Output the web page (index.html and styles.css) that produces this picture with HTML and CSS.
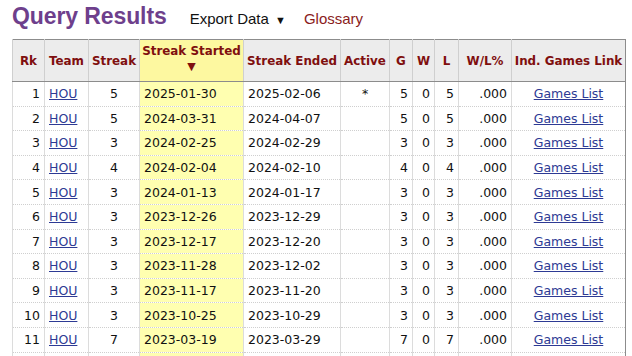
FILE: index.html
```html
<!DOCTYPE html>
<html>
<head>
<meta charset="utf-8">
<link rel="stylesheet" href="styles.css">
</head>
<body>
<div class="top">
  <h1 class="title">Query Results</h1>
  <span class="export">Export Data <span class="tri">▼</span></span>
  <span class="gloss">Glossary</span>
</div>
<table class="res">
  <colgroup>
    <col class="c-rk"><col class="c-team"><col class="c-streak"><col class="c-start"><col class="c-end"><col class="c-active"><col class="c-g"><col class="c-w"><col class="c-l"><col class="c-pct"><col class="c-link">
  </colgroup>
  <thead>
    <tr>
      <th>Rk</th><th>Team</th><th>Streak</th><th class="sorted">Streak Started<br><span class="arrow">▼</span></th><th>Streak Ended</th><th>Active</th><th>G</th><th>W</th><th>L</th><th>W/L%</th><th>Ind. Games Link</th>
    </tr>
  </thead>
  <tbody>
    <tr><td class="r">1</td><td><a href="#">HOU</a></td><td class="c">5</td><td class="y">2025-01-30</td><td>2025-02-06</td><td class="c">*</td><td class="r">5</td><td class="r">0</td><td class="r">5</td><td class="r">.000</td><td class="c"><a href="#">Games List</a></td></tr>
    <tr><td class="r">2</td><td><a href="#">HOU</a></td><td class="c">5</td><td class="y">2024-03-31</td><td>2024-04-07</td><td class="c"></td><td class="r">5</td><td class="r">0</td><td class="r">5</td><td class="r">.000</td><td class="c"><a href="#">Games List</a></td></tr>
    <tr><td class="r">3</td><td><a href="#">HOU</a></td><td class="c">3</td><td class="y">2024-02-25</td><td>2024-02-29</td><td class="c"></td><td class="r">3</td><td class="r">0</td><td class="r">3</td><td class="r">.000</td><td class="c"><a href="#">Games List</a></td></tr>
    <tr><td class="r">4</td><td><a href="#">HOU</a></td><td class="c">4</td><td class="y">2024-02-04</td><td>2024-02-10</td><td class="c"></td><td class="r">4</td><td class="r">0</td><td class="r">4</td><td class="r">.000</td><td class="c"><a href="#">Games List</a></td></tr>
    <tr><td class="r">5</td><td><a href="#">HOU</a></td><td class="c">3</td><td class="y">2024-01-13</td><td>2024-01-17</td><td class="c"></td><td class="r">3</td><td class="r">0</td><td class="r">3</td><td class="r">.000</td><td class="c"><a href="#">Games List</a></td></tr>
    <tr><td class="r">6</td><td><a href="#">HOU</a></td><td class="c">3</td><td class="y">2023-12-26</td><td>2023-12-29</td><td class="c"></td><td class="r">3</td><td class="r">0</td><td class="r">3</td><td class="r">.000</td><td class="c"><a href="#">Games List</a></td></tr>
    <tr><td class="r">7</td><td><a href="#">HOU</a></td><td class="c">3</td><td class="y">2023-12-17</td><td>2023-12-20</td><td class="c"></td><td class="r">3</td><td class="r">0</td><td class="r">3</td><td class="r">.000</td><td class="c"><a href="#">Games List</a></td></tr>
    <tr><td class="r">8</td><td><a href="#">HOU</a></td><td class="c">3</td><td class="y">2023-11-28</td><td>2023-12-02</td><td class="c"></td><td class="r">3</td><td class="r">0</td><td class="r">3</td><td class="r">.000</td><td class="c"><a href="#">Games List</a></td></tr>
    <tr><td class="r">9</td><td><a href="#">HOU</a></td><td class="c">3</td><td class="y">2023-11-17</td><td>2023-11-20</td><td class="c"></td><td class="r">3</td><td class="r">0</td><td class="r">3</td><td class="r">.000</td><td class="c"><a href="#">Games List</a></td></tr>
    <tr><td class="r">10</td><td><a href="#">HOU</a></td><td class="c">3</td><td class="y">2023-10-25</td><td>2023-10-29</td><td class="c"></td><td class="r">3</td><td class="r">0</td><td class="r">3</td><td class="r">.000</td><td class="c"><a href="#">Games List</a></td></tr>
    <tr><td class="r">11</td><td><a href="#">HOU</a></td><td class="c">7</td><td class="y">2023-03-19</td><td>2023-03-29</td><td class="c"></td><td class="r">7</td><td class="r">0</td><td class="r">7</td><td class="r">.000</td><td class="c"><a href="#">Games List</a></td></tr>
    <tr><td></td><td></td><td></td><td class="y"></td><td></td><td></td><td></td><td></td><td></td><td></td><td></td></tr>
  </tbody>
</table>
</body>
</html>
```
FILE: styles.css
```css
html, body {
  margin: 0;
  padding: 0;
  background: #fff;
}
body {
  padding: 0 12px;
  overflow: hidden;
}
.top {
  display: flex;
  align-items: baseline;
  height: 39px;
  font-family: "Liberation Sans", Arial, sans-serif;
}
.title {
  margin: 0;
  font-size: 23px;
  font-weight: bold;
  color: #6e3f8c;
  line-height: 33px;
  letter-spacing: -0.1px;
}
.export {
  margin-left: 23px;
  font-size: 15px;
  color: #111;
}
.tri {
  font-size: 11px;
  margin-left: 2px;
}
.gloss {
  margin-left: 18px;
  font-size: 15px;
  color: #8a1c1c;
}
.res {
  border-collapse: collapse;
  table-layout: fixed;
  width: 613px;
  font-family: "DejaVu Sans", Verdana, sans-serif;
  border: 1px solid #8c8c8c;
}
.c-rk { width: 32px; }
.c-team { width: 44px; }
.c-streak { width: 51px; }
.c-start { width: 104px; }
.c-end { width: 97px; }
.c-active { width: 49px; }
.c-g { width: 23px; }
.c-w { width: 22px; }
.c-l { width: 24px; }
.c-pct { width: 53px; }
.c-link { width: 114px; }
.res th {
  background: #ececec;
  color: #7f0f0f;
  font-size: 11.9px;
  font-weight: bold;
  height: 37px;
  padding: 0 2px;
  line-height: 14px;
  border-left: 1px solid #cfcfcf;
  border-bottom: 1px solid #8c8c8c;
  white-space: nowrap;
  vertical-align: middle;
}
.res th.sorted {
  background: #fdf8a0;
  vertical-align: top;
  padding-top: 4px;
  line-height: 15px;
}
.arrow {
  font-size: 11px;
}
.res td {
  font-size: 12.5px;
  color: #111;
  height: 23.6px;
  padding: 0 4px;
  line-height: 15px;
  border-left: 1px solid #dcdcdc;
  border-top: 1px dotted #cfcfcf;
  white-space: nowrap;
  overflow: hidden;
}
.res td.r { text-align: right; }
.res td.c { text-align: center; }
.res td.y { background: #ffffb0; }
.res a {
  color: #2d3a94;
  text-decoration: underline;
}
```
